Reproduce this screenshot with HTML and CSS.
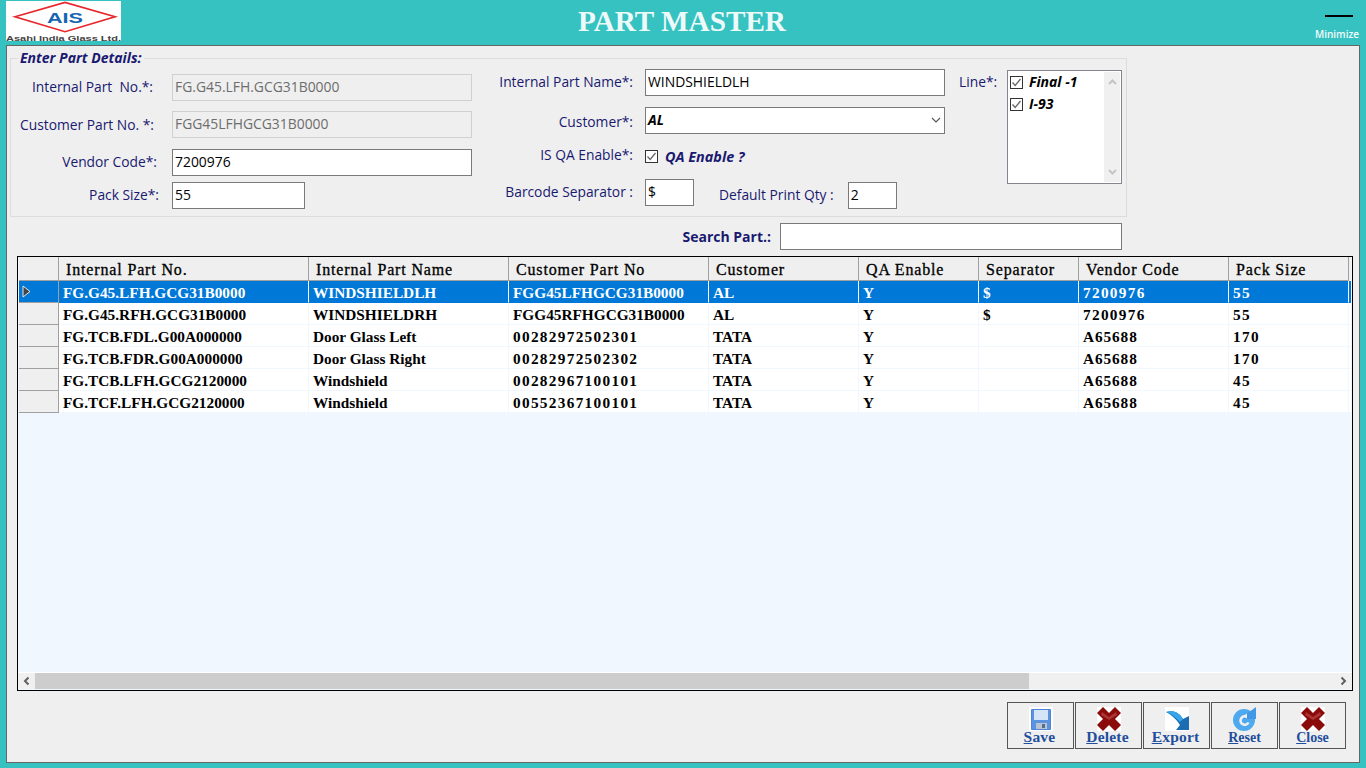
FILE: index.html
```html
<!DOCTYPE html>
<html lang="en">
<head>
  <meta charset="UTF-8">
  <title>Part Master</title>
  <link rel="stylesheet" href="styles.css">
</head>
<body>

  <svg class="defs" width="0" height="0">
    <symbol id="tick" viewBox="0 0 13 13">
      <rect x="0.5" y="0.5" width="12" height="12" fill="#fff" stroke="#333"/>
      <path d="M2.5 6.5 L5.2 9.5 L10.5 3" fill="none" stroke="#666" stroke-width="1.3"/>
    </symbol>
    <symbol id="cross" viewBox="0 0 24 24">
      <rect width="24" height="24" fill="#fff"/>
      <path d="M3 3 L21 21 M21 3 L3 21" fill="none" stroke="#8b0a0a" stroke-width="8.5"/>
      <path d="M5 5 L12 10 L19 5 L20 8 L12 13 L4 8 Z" fill="#a93434"/>
    </symbol>
  </svg>

  <header class="topbar">
    <div class="logo">
      <svg width="115" height="40" viewBox="0 0 115 40">
        <path d="M9 15.7 L59 1.5 L109 15.7 L59 30.7 Z" fill="none" stroke="#e8262c" stroke-width="1.7"/>
        <text x="41" y="21.5" class="logo-mark" textLength="36" lengthAdjust="spacingAndGlyphs">AIS</text>
        <text x="0" y="39.5" class="logo-name" textLength="115" lengthAdjust="spacingAndGlyphs">Asahi India Glass Ltd.</text>
      </svg>
    </div>
    <h1>PART MASTER</h1>
    <div class="minimize">
      <span class="minimize-bar"></span>
      <span>Minimize</span>
    </div>
  </header>

  <main class="panel">
    <fieldset class="details">
      <legend>Enter Part Details:</legend>

      <div class="col col-left">
        <div class="field">
          <label>Internal Part&nbsp; No.*:</label>
          <input class="box" type="text" value="FG.G45.LFH.GCG31B0000" disabled>
        </div>
        <div class="field">
          <label>Customer Part No. *:</label>
          <input class="box" type="text" value="FGG45LFHGCG31B0000" disabled>
        </div>
        <div class="field">
          <label>Vendor Code*:</label>
          <input class="box" type="text" value="7200976">
        </div>
        <div class="field">
          <label>Pack Size*:</label>
          <input class="box box-pack" type="text" value="55">
        </div>
      </div>

      <div class="col col-mid">
        <div class="field">
          <label>Internal Part Name*:</label>
          <input class="box" type="text" value="WINDSHIELDLH">
        </div>
        <div class="field">
          <label>Customer*:</label>
          <div class="box combo">
            <span>AL</span>
            <svg width="10" height="6" viewBox="0 0 10 6"><path d="M1 1 L5 5 L9 1" fill="none" stroke="#555" stroke-width="1.1"/></svg>
          </div>
        </div>
        <div class="field field-check">
          <label>IS QA Enable*:</label>
          <svg class="tick" width="13" height="13"><use href="#tick"/></svg>
          <span class="check-text">QA Enable ?</span>
        </div>
        <div class="field field-sep">
          <label>Barcode Separator :</label>
          <input class="box box-small" type="text" value="$">
          <label class="qty-label">Default Print Qty :</label>
          <input class="box box-small box-qty" type="text" value="2">
        </div>
      </div>

      <div class="col col-line">
        <label>Line*:</label>
        <div class="listbox">
          <ul>
            <li><svg width="13" height="13"><use href="#tick"/></svg><span class="line-name">Final -1</span></li>
            <li><svg width="13" height="13"><use href="#tick"/></svg><span class="line-name">I-93</span></li>
          </ul>
          <div class="list-scroll">
            <svg width="9" height="6" viewBox="0 0 9 6"><path d="M1 5 L4.5 1.5 L8 5" fill="none" stroke="#c4c4c4" stroke-width="2"/></svg>
            <svg width="9" height="6" viewBox="0 0 9 6"><path d="M1 1 L4.5 4.5 L8 1" fill="none" stroke="#c4c4c4" stroke-width="2"/></svg>
          </div>
        </div>
      </div>
    </fieldset>

    <div class="search">
      <label>Search Part.:</label>
      <input class="box" type="text">
    </div>

    <div class="grid">
      <div class="grid-body">
        <table>
          <colgroup>
            <col class="c-head"><col class="c-250"><col class="c-200"><col class="c-200"><col class="c-150"><col class="c-120"><col class="c-100"><col class="c-150"><col class="c-120"><col>
          </colgroup>
          <thead>
            <tr>
              <th></th>
              <th>Internal Part No.</th>
              <th>Internal Part Name</th>
              <th>Customer Part No</th>
              <th>Customer</th>
              <th>QA Enable</th>
              <th>Separator</th>
              <th>Vendor Code</th>
              <th>Pack Size</th>
              <th class="filler"></th>
            </tr>
          </thead>
          <tbody>
            <tr class="selected">
              <th><svg width="9" height="13" viewBox="0 0 9 13"><path d="M1 1 L8 6.5 L1 12 Z" fill="#444" stroke="#e6e6e6" stroke-width="1"/></svg></th>
              <td>FG.G45.LFH.GCG31B0000</td><td>WINDSHIELDLH</td><td>FGG45LFHGCG31B0000</td><td>AL</td><td>Y</td><td>$</td><td class="num">7200976</td><td class="num">55</td><td class="filler"></td>
            </tr>
            <tr>
              <th></th>
              <td>FG.G45.RFH.GCG31B0000</td><td>WINDSHIELDRH</td><td>FGG45RFHGCG31B0000</td><td>AL</td><td>Y</td><td>$</td><td class="num">7200976</td><td class="num">55</td><td class="filler"></td>
            </tr>
            <tr>
              <th></th>
              <td>FG.TCB.FDL.G00A000000</td><td>Door Glass Left</td><td class="num">00282972502301</td><td>TATA</td><td>Y</td><td></td><td class="code">A65688</td><td class="num">170</td><td class="filler"></td>
            </tr>
            <tr>
              <th></th>
              <td>FG.TCB.FDR.G00A000000</td><td>Door Glass Right</td><td class="num">00282972502302</td><td>TATA</td><td>Y</td><td></td><td class="code">A65688</td><td class="num">170</td><td class="filler"></td>
            </tr>
            <tr>
              <th></th>
              <td>FG.TCB.LFH.GCG2120000</td><td>Windshield</td><td class="num">00282967100101</td><td>TATA</td><td>Y</td><td></td><td class="code">A65688</td><td class="num">45</td><td class="filler"></td>
            </tr>
            <tr>
              <th></th>
              <td>FG.TCF.LFH.GCG2120000</td><td>Windshield</td><td class="num">00552367100101</td><td>TATA</td><td>Y</td><td></td><td class="code">A65688</td><td class="num">45</td><td class="filler"></td>
            </tr>
          </tbody>
        </table>
      </div>
      <div class="hscroll">
        <svg class="arrow" width="17" height="16" viewBox="0 0 17 16"><path d="M10.5 4.5 L7 8 L10.5 11.5" fill="none" stroke="#606060" stroke-width="2"/></svg>
        <div class="track"><div class="thumb"></div></div>
        <svg class="arrow" width="17" height="16" viewBox="0 0 17 16"><path d="M6.5 4.5 L10 8 L6.5 11.5" fill="none" stroke="#606060" stroke-width="2"/></svg>
      </div>
    </div>

    <div class="actions">
      <button>
        <svg width="24" height="24" viewBox="0 0 24 24">
          <rect width="24" height="24" fill="#fff"/>
          <path d="M2.5 2.5 H21.5 V22.5 H2.5 Z" fill="#5b93e0" stroke="#4f86d6"/>
          <rect x="5" y="3" width="14" height="10" fill="#d5e4f7"/>
          <rect x="7" y="16" width="11" height="6" fill="#b9c4d2"/>
          <rect x="13" y="17" width="3" height="4" fill="#5a6f8c"/>
        </svg>
        <span class="big"><u>S</u>ave</span>
      </button>
      <button>
        <svg width="24" height="24"><use href="#cross"/></svg>
        <span class="big"><u>D</u>elete</span>
      </button>
      <button>
        <svg width="24" height="24" viewBox="0 0 24 24">
          <rect width="24" height="24" fill="#fff"/>
          <path d="M1 5 C8 3 14 5 18 12 L24 9 V23 H11 L15 18 C11 12 7 8 1 5 Z" fill="#1b6cb0"/>
          <path d="M1 5 C8 3 14 5 18 12 L15 15 C11 11 7 7 1 5 Z" fill="#35a6ec"/>
        </svg>
        <span class="big"><u>E</u>xport</span>
      </button>
      <button>
        <svg width="24" height="24" viewBox="0 0 24 24">
          <circle cx="11" cy="13" r="11" fill="#4fa9ef"/>
          <path d="M13 9.5 A4.2 4.2 0 1 0 15.5 15.5" fill="none" stroke="#efefef" stroke-width="2.6"/>
          <path d="M12 8 L23 0 V12 H11 Z" fill="#4098e6"/>
          <path d="M9 9.5 L14 6.5 V11.5 Z" fill="#efefef"/>
        </svg>
        <span class="small"><u>R</u>eset</span>
      </button>
      <button>
        <svg width="24" height="24"><use href="#cross"/></svg>
        <span class="small"><u>C</u>lose</span>
      </button>
    </div>
  </main>

</body>
</html>
```

FILE: styles.css
```css
* {
  box-sizing: border-box;
}

body {
  margin: 0;
  width: 1366px;
  height: 768px;
  overflow: hidden;
  background: #36c2c1;
  font-family: "Open Sans", sans-serif;
  font-size: 13.8px;
  color: #191970;
}

.defs {
  display: block;
  height: 0;
}

/* top bar */
.topbar {
  display: grid;
  grid-template-columns: 1fr auto 1fr;
  height: 45px;
}

.logo {
  margin: 1px 0 0 6px;
  width: 115px;
  height: 40px;
  background: #fff;
}

.logo svg {
  display: block;
}

.logo-mark {
  font-family: "Liberation Sans", sans-serif;
  font-weight: bold;
  font-size: 14.5px;
  fill: #1565b0;
}

.logo-name {
  font-family: "Liberation Sans", sans-serif;
  font-weight: bold;
  font-size: 7px;
  fill: #444;
}

.topbar h1 {
  margin: 0 2px 0 0;
  font-family: "Liberation Serif", serif;
  font-size: 29.2px;
  line-height: 43px;
  font-weight: bold;
  color: #eefafa;
}

.minimize {
  display: flex;
  flex-direction: column;
  align-items: flex-end;
  padding: 15px 7px 0 0;
  font-size: 10px;
  font-weight: 600;
  color: #f4fcfc;
}

.minimize-bar {
  width: 28px;
  height: 2px;
  margin: 0 6px 10px 0;
  background: #000;
}

/* main panel */
.panel {
  display: flex;
  flex-direction: column;
  width: 1354px;
  height: 718px;
  margin-left: 6px;
  padding: 3px 0 0 3px;
  background: #efefef;
  border: 1px solid #666;
}

.details {
  display: flex;
  width: 1117px;
  height: 168px;
  margin: 0;
  padding: 0;
  border: 1px solid #dcdcdc;
}

.details legend {
  margin-left: 7px;
  padding: 0 2px;
  line-height: 18px;
  font-size: 14px;
  font-weight: bold;
  font-style: italic;
}

.col {
  flex: none;
}

.field {
  display: flex;
  align-items: center;
}

.field label {
  padding-bottom: 2px;
}

.box {
  height: 27px;
  padding: 0 2px 2px;
  border: 1px solid #7a7a7a;
  background: #fff;
  font-family: "Open Sans", sans-serif;
  font-size: 13.9px;
  color: #000;
  outline: none;
}

.box:disabled {
  border: 1px solid #d0d0d0;
  background: #efefef;
  color: #6d6d6d;
}

/* left column */
.col-left {
  width: 461px;
  padding-top: 7px;
}

.col-left .field {
  margin-bottom: 10px;
}

.col-left .field:nth-child(2) {
  margin-bottom: 11px;
}

.col-left .field:nth-child(3) {
  margin-bottom: 6px;
}

.col-left label {
  width: 161px;
  text-align: right;
}

.col-left .field:nth-child(1) label {
  padding-right: 19px;
}

.col-left .field:nth-child(2) label {
  padding-right: 18px;
  padding-bottom: 0;
}

.col-left .field:nth-child(3) label {
  padding-right: 15px;
}

.col-left .field:nth-child(4) label {
  padding-right: 13px;
}

.col-left .box {
  width: 300px;
}

.col-left .box-pack {
  width: 133px;
}

/* middle column */
.col-mid {
  width: 473px;
  padding: 2px 0 0 0;
}

.col-mid label {
  width: 173px;
  padding-right: 12px;
  text-align: right;
}

.col-mid .field {
  margin-bottom: 11px;
}

.col-mid .field:nth-child(2) label {
  padding-top: 2px;
  padding-bottom: 0;
}

.col-mid .box {
  width: 300px;
}

.combo {
  display: flex;
  align-items: center;
  justify-content: space-between;
  padding-right: 3px;
  font-weight: bold;
  font-style: italic;
}

.field-check {
  height: 23px;
}

.col-mid .field-check label {
  padding-bottom: 4px;
}

.tick {
  flex: none;
}

.check-text {
  margin-left: 7px;
  font-size: 14.4px;
  font-weight: bold;
  font-style: italic;
}

.col-mid .field-sep {
  align-items: flex-start;
  margin: 0;
}

.field-sep label {
  line-height: 26px;
  padding-bottom: 0;
}

.col-mid .box-small {
  width: 49px;
}

.col-mid .qty-label {
  width: auto;
  margin: 3px 0 0 25px;
  padding-right: 14px;
}

.col-mid .box-qty {
  margin-top: 3px;
}

/* line list */
.col-line {
  display: flex;
  padding: 3px 0 0 14px;
}

.col-line label {
  width: 48px;
  line-height: 24px;
}

.listbox {
  display: flex;
  width: 115px;
  height: 114px;
  border: 1px solid #85858f;
  background: #fff;
}

.listbox ul {
  flex: 1;
  margin: 0;
  padding: 0 0 0 2px;
  list-style: none;
  font-size: 14px;
  font-weight: bold;
  font-style: italic;
  color: #000;
}

.listbox li {
  display: flex;
  align-items: center;
  gap: 6px;
  height: 22px;
}

.line-name {
  padding-bottom: 2px;
}

.list-scroll {
  display: flex;
  flex-direction: column;
  justify-content: space-between;
  align-items: center;
  width: 16px;
  margin: 1px;
  padding: 7px 0;
  background: #f0f0f0;
}

/* search */
.search {
  display: flex;
  align-items: center;
  justify-content: flex-end;
  width: 1112px;
  margin-top: 6px;
}

.search label {
  margin-right: 9px;
  font-size: 14px;
  font-weight: bold;
}

.search .box {
  width: 342px;
}

/* data grid */
.grid {
  display: flex;
  flex-direction: column;
  width: 1336px;
  height: 435px;
  margin: 6px 0 0 7px;
  border: 1px solid #000;
  background: #f0f7ff;
}

.grid-body {
  flex: 1;
  padding-left: 1px;
  border-bottom: 1px solid #fff;
}

.grid table {
  width: 1332px;
  table-layout: fixed;
  border-collapse: separate;
  border-spacing: 0;
  font-family: "Liberation Serif", serif;
  font-size: 15.3px;
  color: #000;
}

.c-head { width: 40px; }
.c-250 { width: 250px; }
.c-200 { width: 200px; }
.c-150 { width: 150px; }
.c-120 { width: 120px; }
.c-100 { width: 100px; }

.grid thead th {
  height: 24px;
  padding: 2px 0 0 7px;
  overflow: hidden;
  white-space: nowrap;
  text-align: left;
  font-size: 16px;
  font-weight: normal;
  letter-spacing: 0.85px;
  -webkit-text-stroke: 0.3px #000;
  background: #efefef;
  border-right: 1px solid #a0a0a0;
  border-bottom: 1px solid #a0a0a0;
}

.grid tbody th {
  height: 22px;
  padding: 0 0 0 3px;
  text-align: left;
  background: #efefef;
  border-right: 1px solid #a0a0a0;
  border-bottom: 1px solid #a0a0a0;
}

.grid tbody th svg {
  display: block;
}

.grid td {
  height: 22px;
  padding: 2px 0 0 4px;
  overflow: hidden;
  white-space: nowrap;
  font-weight: bold;
  background: #fff;
  border-right: 1px solid #f0f7ff;
  border-bottom: 1px solid #f0f7ff;
}

.grid td.num {
  letter-spacing: 1.3px;
}

.grid td.code {
  letter-spacing: 0.9px;
}

.grid thead .filler {
  background: #efefef;
  border: none;
}

.grid td.filler {
  border-right: none;
}

.grid .selected td,
.grid .selected th {
  background: #0078d7;
  color: #fff;
  border-right-color: #fff;
  border-bottom-color: #0078d7;
}

.grid .selected th {
  border-right-color: #a0a0a0;
  border-bottom-color: #a0a0a0;
}

.grid .selected td.filler {
  border-right: none;
}

.hscroll {
  display: flex;
  height: 16px;
  margin-bottom: 1px;
  background: #f0f0f0;
}

.hscroll .arrow {
  flex: none;
}

.track {
  flex: 1;
}

.thumb {
  width: 994px;
  height: 16px;
  background: #cdcdcd;
}

/* buttons */
.actions {
  display: flex;
  justify-content: flex-end;
  gap: 1px;
  margin-top: 11px;
  padding-right: 13px;
}

.actions button {
  display: flex;
  flex-direction: column;
  align-items: center;
  width: 67px;
  height: 47px;
  padding: 4px 0 0;
  background: #efefef;
  border: 1px solid #555;
  font-family: "Liberation Serif", serif;
  font-weight: bold;
  font-size: 14px;
  line-height: 14px;
  color: #1f4e9c;
}

.actions button svg {
  flex: none;
  margin-bottom: -1px;
}

.actions .big {
  margin-right: 2px;
  font-size: 15.5px;
  letter-spacing: 0.2px;
}

.actions .small {
  margin-top: 1px;
}
```
